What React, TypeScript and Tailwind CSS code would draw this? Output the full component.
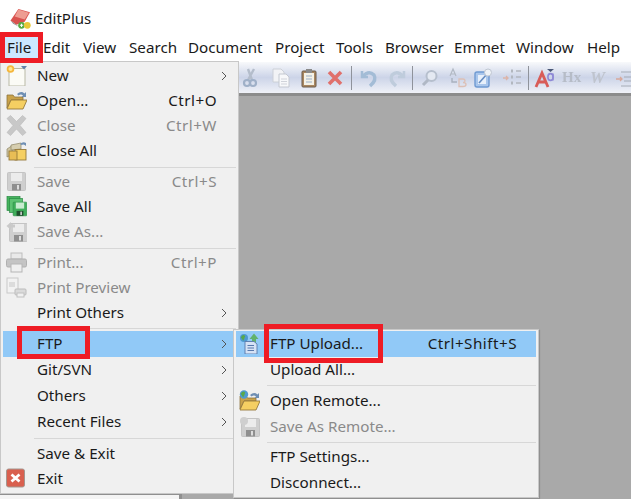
import React from "react";

const font = { fontFamily: '"Noto Sans", "Open Sans", sans-serif' };

const Folder = () => (
  <>
    <path d="M1 18 L1 5 L7 5 L8.5 7 L17 7 L17 10 L5 10 Z" fill="#c9a24a" stroke="#8d7440" strokeWidth="0.8" />
    <path d="M1 19 L5 10 L21 10 L17 19 Z" fill="#f5cf62" stroke="#96793a" strokeWidth="0.9" />
  </>
);

const Globe = ({ x, y, r }: { x: number; y: number; r: number }) => (
  <>
    <circle cx={x} cy={y} r={r} fill="#4f9ad0" />
    <path d={`M${x - r * 0.8} ${y - r * 0.2} q${r * 0.6} ${-r * 0.9} ${r * 1.1} ${-r * 0.3} q${-r * 0.2} ${r * 0.7} ${-r * 0.5} ${r * 1.2} z`} fill="#58a84c" />
  </>
);

const Floppy = ({ gray = true }: { gray?: boolean }) => (
  <>
    <rect x="1.5" y="1.5" width="18" height="18" rx="1" fill={gray ? "#cfcfcf" : "#3fae5a"} stroke={gray ? "#bdbdbd" : "#2a8a44"} strokeWidth="0.8" />
    <rect x="5" y="2" width="11" height="8" fill={gray ? "#ececec" : "#c8ecd0"} />
    <rect x="6" y="13" width="9" height="6.5" fill={gray ? "#8f8f8f" : "#20502e"} />
    <rect x="11" y="14" width="2" height="4.5" fill={gray ? "#dddddd" : "#d8d8d8"} />
  </>
);

const icons: Record<string, React.ReactNode> = {
  new: (
    <>
      <path d="M3 3.5 H19 V21 H3 Z" fill="#fbfbf6" stroke="#b9b9a6" strokeWidth="1" />
      <circle cx="4.5" cy="4" r="3.8" fill="#f5b63c" />
      <circle cx="4.5" cy="4" r="2" fill="#ffe690" />
      <path d="M15 1 H21 L18 4.5 Z" fill="#5f7fa8" />
    </>
  ),
  open: (
    <>
      <Folder />
      <path d="M11 4 Q15 0.5 18.5 3.5 L20 2 V7 H15.5 L17 5.5 Q15 3.5 12.5 5.5 Z" fill="#6f8fb4" />
    </>
  ),
  close: (
    <path d="M1 3.5 L4.5 0.5 L10.5 6.5 L16.5 0.5 L20 3.5 L14 10.5 L20 17.5 L16.5 20.5 L10.5 14 L4.5 20.5 L1 17.5 L7 10.5 Z" fill="#c8c8c8" stroke="#b8b8b8" strokeWidth="0.6" />
  ),
  closeAll: (
    <>
      <path d="M1 9 L7 5 L7 14 L1 17 Z" fill="#cfc6a4" stroke="#8d8464" strokeWidth="0.7" />
      <path d="M5 5 L15 3 L15 9 L5 10 Z" fill="#d6ceb0" stroke="#8d8464" strokeWidth="0.7" />
      <rect x="9" y="9.5" width="11" height="10.5" fill="#f5cf62" stroke="#96793a" strokeWidth="0.9" />
      <rect x="3" y="11" width="8" height="9" fill="#e8bd55" stroke="#96793a" strokeWidth="0.9" />
      <path d="M14 4 Q17 1 20 3 L20 6 Q18 3.5 15.5 5 Z" fill="#6f8fb4" />
    </>
  ),
  save: <Floppy />,
  saveAll: (
    <>
      <rect x="1" y="0.5" width="13" height="14" fill="#46b45e" stroke="#2a8a44" strokeWidth="0.7" />
      <rect x="3.5" y="2.5" width="13" height="14" fill="#5cc272" stroke="#2a8a44" strokeWidth="0.7" />
      <g transform="translate(6 5) scale(0.76)">
        <Floppy gray={false} />
      </g>
    </>
  ),
  saveAs: (
    <>
      <g transform="translate(2 1)"><Floppy /></g>
      <path d="M0.5 5 L5 1 V3.5 H9 V6.5 H5 V9 Z" fill="#c9c9c9" />
    </>
  ),
  print: (
    <>
      <rect x="5" y="1" width="11" height="6" fill="#e9e9e9" stroke="#bdbdbd" />
      <rect x="0.5" y="7" width="20" height="8" rx="1.5" fill="#c4c4c4" stroke="#b0b0b0" />
      <rect x="5" y="12" width="11" height="8" fill="#efefef" stroke="#b5b5b5" />
    </>
  ),
  preview: (
    <>
      <rect x="1" y="1" width="11" height="15" fill="#f2f2f2" stroke="#c8c8c8" />
      <rect x="3" y="5" width="6" height="5" fill="#dcdcdc" />
      <rect x="9" y="12" width="11" height="6" rx="1" fill="#dadada" stroke="#bcbcbc" />
      <rect x="11" y="16" width="7" height="4" fill="#f0f0f0" stroke="#c0c0c0" />
    </>
  ),
  exit: (
    <>
      <rect x="0.5" y="1" width="18" height="18" rx="2" fill="#d9604f" stroke="#a5968f" strokeWidth="1" />
      <path d="M5.5 6.5 L13.5 13.5 M13.5 6.5 L5.5 13.5" stroke="#ffffff" strokeWidth="2.8" />
    </>
  ),
  upload: (
    <>
      <Globe x={5} y={5} r={4} />
      <path d="M15 0.5 L19.5 6 H17 V11 H13 V6 H10.5 Z" fill="#62b26c" />
      <path d="M6 8.5 H15 L18 11 V21 H6 Z" fill="#d6e2f5" stroke="#5878ac" strokeWidth="0.9" />
      <path d="M8.5 12.5 H15 M8.5 15 H15 M8.5 17.5 H15" stroke="#5878ac" strokeWidth="1" />
    </>
  ),
  openRemote: (
    <>
      <g transform="translate(0 1)"><Folder /></g>
      <Globe x={5} y={4.5} r={4.2} />
      <path d="M11 5 Q15 1.5 18.5 4.5 L20 3 V8 H15.5 L17 6.5 Q15 4.5 12.5 6.5 Z" fill="#6f8fb4" />
    </>
  ),
  saveRemote: (
    <>
      <g transform="translate(1 1)"><Floppy /></g>
      <circle cx="5" cy="5" r="4" fill="#cfcfcf" />
    </>
  ),
};

const MenuIcon = ({ name }: { name: string }) => (
  <svg viewBox="0 0 21 21" className="h-[21px] w-[21px] blur-[0.3px]">
    {icons[name]}
  </svg>
);

const Chevron = () => (
  <svg viewBox="0 0 8 10" className="h-[10px] w-[8px]">
    <path d="M2 1 L6 5 L2 9" fill="none" stroke="#555555" strokeWidth="1" />
  </svg>
);

const Item = ({ label, icon, keyText, off, sub, hot, tall }: { label: string; icon?: string; keyText?: string; off?: boolean; sub?: boolean; hot?: boolean; tall?: boolean }) => (
  <div className={`flex items-center ${tall ? "h-[26px] pb-[1px]" : "h-[25px] pb-[2px]"} ${hot ? "bg-[#91c9f7]" : ""}`}>
    <div className="flex w-[32px] shrink-0 justify-start pl-[3px]">{icon ? <MenuIcon name={icon} /> : null}</div>
    <span className={`pl-[2px] ${off ? "text-[#8a8a8a]" : "text-[#1a1a1a]"}`}>{label}</span>
    <span className={`ml-auto tracking-[0.5px] ${off ? "text-[#8a8a8a]" : "text-[#1a1a1a]"}`}>{keyText}</span>
    <div className="flex w-[19px] shrink-0 justify-start pl-[3px]">{sub ? <Chevron /> : null}</div>
  </div>
);

const Sep = ({ h }: { h: string }) => (
  <div className={`flex items-center pl-[31px] ${h}`}>
    <div className="h-px w-full bg-[#d7d7d7]" />
  </div>
);

const RedBox = ({ className }: { className: string }) => (
  <div className={`pointer-events-none absolute border-[#ee1c25] ${className}`} />
);

const ToolIcon = ({ children, ml = 0 }: { children: React.ReactNode; ml?: number }) => (
  <svg viewBox="0 0 20 20" width={20} height={20} style={{ marginLeft: ml }} className="shrink-0 overflow-visible">
    {children}
  </svg>
);

const ToolSep = ({ className }: { className: string }) => <div className={`h-[24px] w-px shrink-0 bg-[#8f939b] ${className}`} />;

const Toolbar = () => (
  <div className="flex h-[31px] items-center bg-gradient-to-b from-[#f8f9fb] via-[#ccd4e8] to-[#f0f2f8] pl-[240px] blur-[0.7px]">
    <ToolIcon>
      <path d="M14 1 L8 12 M8 1 L12 12" stroke="#b4bdcb" strokeWidth="2.4" />
      <circle cx="7" cy="15" r="3" fill="none" stroke="#9fb0c8" strokeWidth="2.2" />
      <circle cx="13" cy="15" r="3" fill="none" stroke="#9fb0c8" strokeWidth="2.2" />
    </ToolIcon>
    <ToolIcon ml={11}>
      <path d="M2 1 H10 L13 4 V14 H2 Z" fill="#f2f3f6" stroke="#ccd0d7" />
      <path d="M8 6 H15 L18 9 V19 H8 Z" fill="#f7f8fa" stroke="#c4c8d1" />
      <path d="M10 11 H16 M10 13.5 H16 M10 16 H16" stroke="#d0d3da" />
    </ToolIcon>
    <ToolIcon ml={8}>
      <rect x="3" y="3" width="14" height="16" rx="1" fill="#a98760" stroke="#6b5a4a" />
      <rect x="5" y="5" width="10" height="12" fill="#f4f1e6" />
      <rect x="7" y="1" width="6" height="4" fill="#8a8a8a" />
      <path d="M7 8 H13 M7 11 H13 M7 14 H13" stroke="#9aafc8" />
    </ToolIcon>
    <ToolIcon ml={6}>
      <path d="M4 4 L16 16 M16 4 L4 16" stroke="#e0706c" strokeWidth="3.6" />
    </ToolIcon>
    <ToolSep className="ml-[6px]" />
    <ToolIcon ml={7}>
      <path d="M3 3 V9 H9" fill="none" stroke="#a3bcd6" strokeWidth="2.5" />
      <path d="M4 8 Q10 2 15 7 Q18 12 11 18" fill="none" stroke="#a3bcd6" strokeWidth="3.4" />
    </ToolIcon>
    <ToolIcon ml={8}>
      <path d="M17 3 V9 H11" fill="none" stroke="#bfccdc" strokeWidth="2.5" />
      <path d="M16 8 Q10 2 5 7 Q2 12 9 18" fill="none" stroke="#bfccdc" strokeWidth="3.4" />
    </ToolIcon>
    <ToolSep className="ml-[5px]" />
    <ToolIcon ml={7}>
      <circle cx="11.5" cy="8" r="5" fill="#e4e9f2" stroke="#b6bfcd" strokeWidth="2" />
      <path d="M8 12 L3 17" stroke="#b0b8c5" strokeWidth="3" />
    </ToolIcon>
    <ToolIcon ml={7}>
      <path d="M3 8 L6 1 L9 8 M4 6 H8" fill="none" stroke="#b2b9c4" strokeWidth="1.2" />
      <path d="M5 10 V14 H10" fill="none" stroke="#a9b1be" strokeWidth="1.4" />
      <path d="M12 11 H16 Q18 11 18 13 Q18 14.5 16 14.5 Q19 14.5 19 16.5 Q19 18.5 16 18.5 H12 Z" fill="none" stroke="#dcc0b6" strokeWidth="1.3" />
    </ToolIcon>
    <ToolIcon ml={6}>
      <rect x="2" y="4" width="14" height="15" rx="2" fill="#a9c6ec" stroke="#6f9ad2" strokeWidth="1.4" />
      <rect x="5" y="7" width="8" height="9" fill="#e8f0fb" />
      <path d="M6 15 L14 6" stroke="#648bc0" strokeWidth="1.6" />
      <circle cx="15" cy="4.5" r="3.5" fill="#eef2f7" stroke="#c0c7d2" />
    </ToolIcon>
    <ToolIcon ml={9}>
      <path d="M1 10 H6 M4 8 L6 10 L4 12" fill="none" stroke="#dcb4a8" strokeWidth="1.3" />
      <path d="M9 3 H11 M9 9 H11 M9 15 H11" stroke="#b2b7bf" strokeWidth="3" />
      <path d="M14 3 H19 M14 9 H19 M14 15 H19" stroke="#b2b7bf" strokeWidth="1.3" />
    </ToolIcon>
    <ToolSep className="ml-[6px]" />
    <ToolIcon ml={6}>
      <path d="M1 19 L7 5 L13 19 M3.5 14 H10.5" fill="none" stroke="#d85c58" strokeWidth="2.8" />
      <path d="M12 1 H19 L15.5 4 Z" fill="#4a5878" />
      <ellipse cx="15.5" cy="9" rx="2.6" ry="3.4" fill="none" stroke="#8f8ad6" strokeWidth="1.6" />
      <path d="M18 5.5 V12.5" stroke="#8f8ad6" strokeWidth="1.4" />
    </ToolIcon>
    <span className="ml-[7px] w-[23px] shrink-0 text-[15px] font-bold text-[#b6bcc7]" style={{ fontFamily: '"Liberation Serif", serif' }}>Hx</span>
    <span className="ml-[5px] w-[20px] shrink-0 text-[17px] font-bold italic text-[#bfc4ce]" style={{ fontFamily: '"Liberation Serif", serif' }}>W</span>
    <ToolIcon ml={6}>
      <path d="M5 4 H20 M8 9 H20 M8 13 H20 M5 18 H20" stroke="#a6acb6" strokeWidth="1.2" />
      <path d="M0 11 H6 M4 9 L6 11 L4 13" fill="none" stroke="#d8a89a" strokeWidth="1.3" />
    </ToolIcon>
  </div>
);

const menuBar = [
  ["File", "mr-[3px] w-[33px]"],
  ["Edit", "w-[40px]"],
  ["View", "w-[46px]"],
  ["Search", "w-[59px]"],
  ["Document", "w-[87px]"],
  ["Project", "w-[61px]"],
  ["Tools", "w-[49px]"],
  ["Browser", "w-[69px]"],
  ["Emmet", "w-[62px]"],
  ["Window", "w-[71px]"],
  ["Help", "w-[44px]"],
];

export default function App() {
  return (
    <div className="relative h-[499px] w-[631px] overflow-hidden bg-white text-[15.2px] leading-none text-[#1a1a1a]" style={font}>
      <header className="flex h-[32px] items-center pl-[10px] pt-[4px]">
        <svg viewBox="0 0 20 20" className="h-[21px] w-[21px] shrink-0">
          <path d="M0.5 12 L8 1 L19 4 L14 13 L6 16 Z" fill="#d9534f" />
          <path d="M8 1.5 L18 4.5 L14 11 L4.5 8 Z" fill="#ee9d92" />
          <path d="M0.5 12 L6 16 L9 18 L3 15 Z" fill="#8f8f8f" />
          <circle cx="11" cy="16.5" r="3.2" fill="#55ab45" />
          <circle cx="16.5" cy="16.5" r="3.2" fill="#e8c838" />
          <path d="M9.5 16.5 H12.5 M11 15 V18" stroke="#fff" strokeWidth="1" />
        </svg>
        <span className="pl-[4px] text-[15px]">EditPlus</span>
      </header>

      <nav className="flex h-[30px] items-center pl-[5px] pt-[1px]">
        {menuBar.map(([label, width]) => (
          <div key={label} className={`flex h-[21px] items-center pl-[2px] ${width} ${label === "File" ? "bg-[#cce8ff]" : ""}`}>
            {label}
          </div>
        ))}
      </nav>

      <Toolbar />
      <div className="h-[3px] bg-[#8c8c8c]" />
      <div className="flex h-[403px] bg-[#a9a9a9]">
        <div className="flex w-[182px] flex-col justify-end">
          <div className="h-[5px] border-r-[3px] border-t border-[#8f8f8f] bg-[#f4f4f4]" />
        </div>
      </div>

      {/* File menu */}
      <div className="absolute left-0 top-[61px] h-[433px] w-[239px] border border-[#c8c8c8] bg-[#f0f0f0] px-[2px] pt-[2px]">
        <Item label="New" icon="new" sub />
        <Item label="Open..." icon="open" keyText="Ctrl+O" />
        <Item label="Close" icon="close" keyText="Ctrl+W" off />
        <Item label="Close All" icon="closeAll" />
        <Sep h="h-[6px]" />
        <Item label="Save" icon="save" keyText="Ctrl+S" off />
        <Item label="Save All" icon="saveAll" />
        <Item label="Save As..." icon="saveAs" off />
        <Sep h="h-[6px]" />
        <Item label="Print..." icon="print" keyText="Ctrl+P" off />
        <Item label="Print Preview" icon="preview" off />
        <Item label="Print Others" sub />
        <Sep h="h-[5px]" />
        <Item label="FTP" sub hot tall />
        <Item label="Git/SVN" sub tall />
        <Item label="Others" sub tall />
        <Item label="Recent Files" sub tall />
        <Sep h="h-[7px]" />
        <Item label="Save & Exit" />
        <Item label="Exit" icon="exit" />
      </div>

      {/* FTP submenu */}
      <div className="absolute left-[233px] top-[329px] h-[169px] w-[306px] border border-[#c8c8c8] bg-[#f0f0f0] px-[2px] pt-[1px] shadow-[1px_1px_1px_rgba(0,0,0,0.15)]">
        <Item label="FTP Upload..." icon="upload" keyText="Ctrl+Shift+S" hot tall />
        <Item label="Upload All..." tall />
        <Sep h="h-[5px]" />
        <Item label="Open Remote..." icon="openRemote" tall />
        <Item label="Save As Remote..." icon="saveRemote" off tall />
        <Sep h="h-[4px]" />
        <Item label="FTP Settings..." tall />
        <Item label="Disconnect..." tall />
      </div>

      <RedBox className="left-0 top-[32px] h-[31px] w-[43px] border-[5px]" />
      <RedBox className="left-[17px] top-[326px] h-[33px] w-[73px] border-[5px]" />
      <RedBox className="left-[264px] top-[324px] h-[39px] w-[119px] border-[5px]" />
    </div>
  );
}
